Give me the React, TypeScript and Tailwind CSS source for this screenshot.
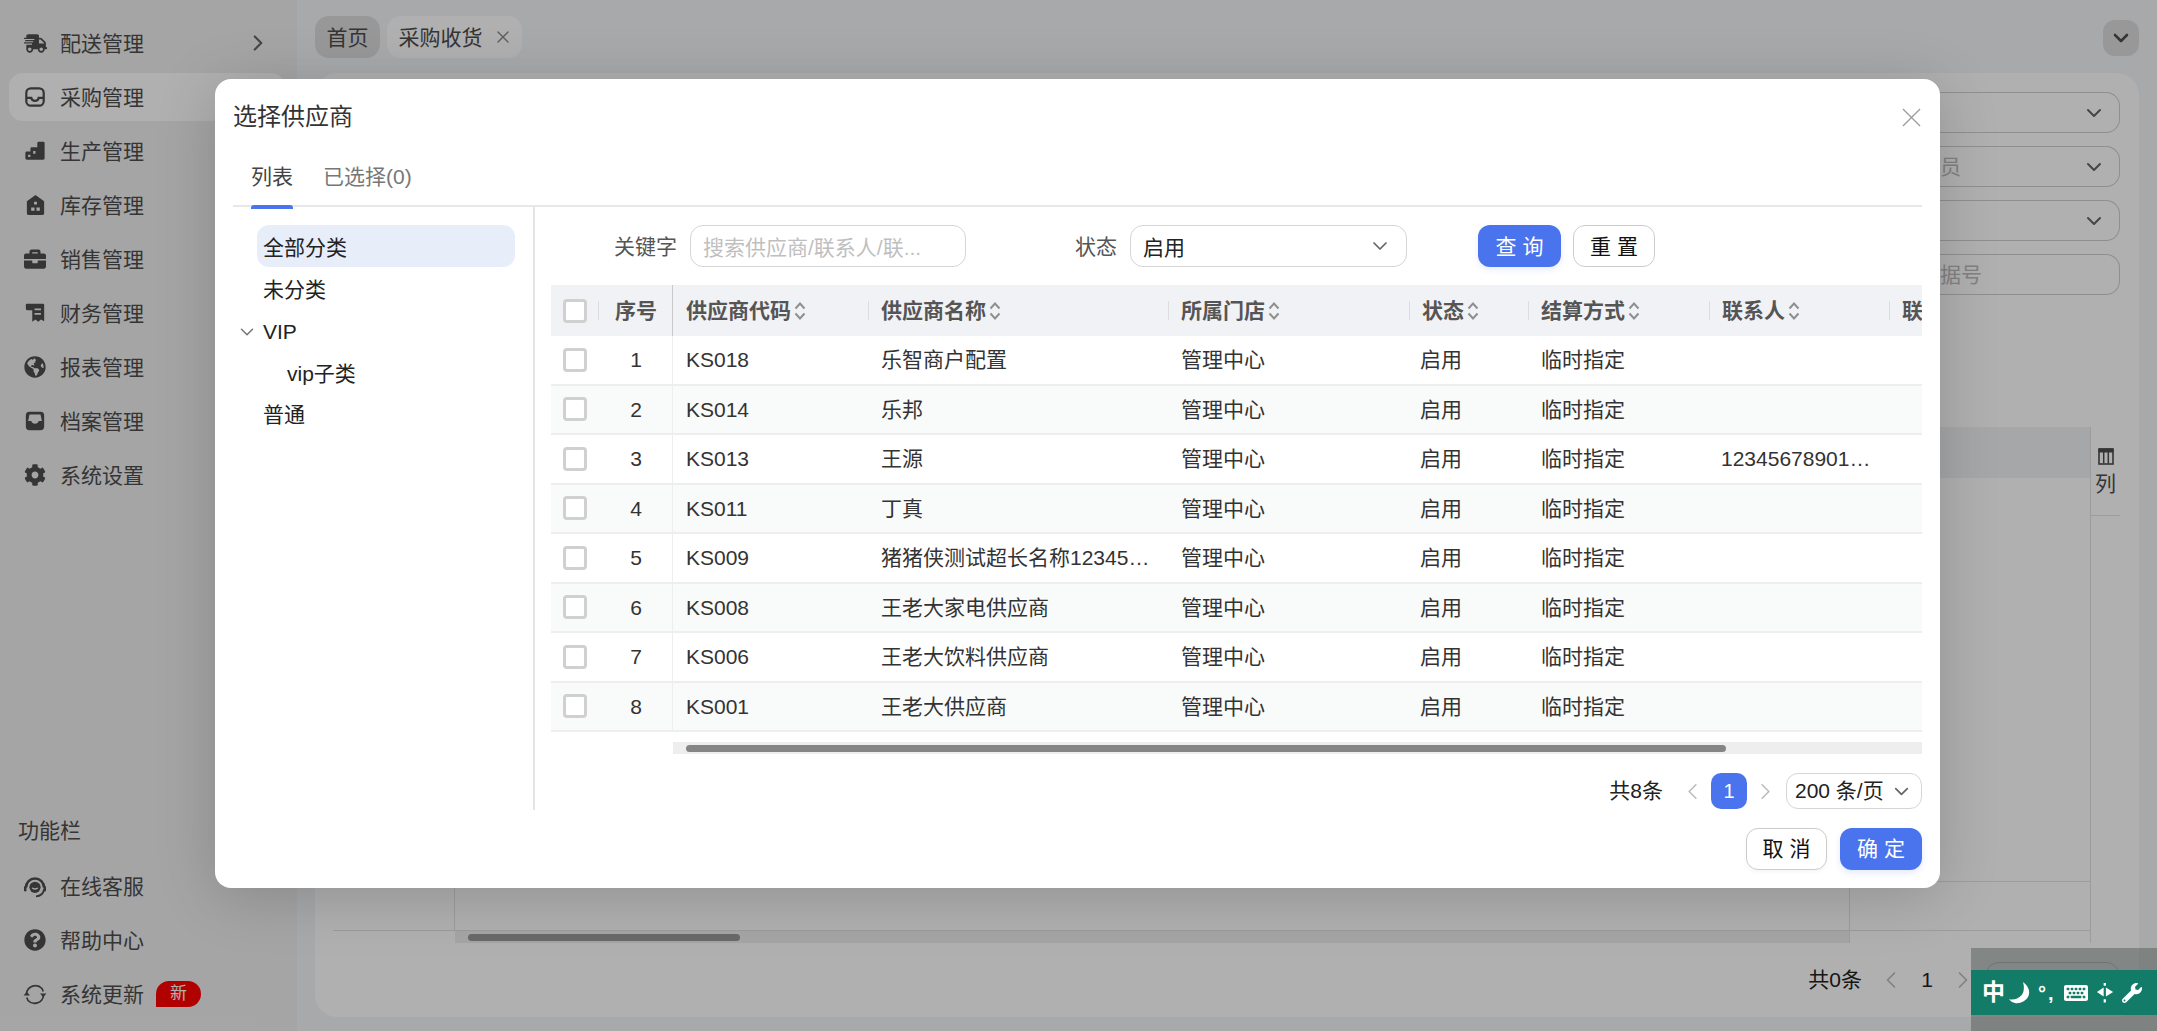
import React from "react";
import { FaBriefcase, FaCog, FaGlobeAmericas, FaKeyboard, FaQuestionCircle, FaShippingFast, FaWrench } from "react-icons/fa";
import { ChevronDown, ChevronLeft, ChevronRight, X } from "lucide-react";

const FONT = "font-['Liberation_Sans','Noto_Sans_CJK_SC',sans-serif]";

// sidebar icons the packages don't have
const InboxLine = () => (
  <svg viewBox="0 0 24 24" className="h-[22px] w-[22px]" fill="none" stroke="currentColor" strokeWidth="2.4">
    <rect x="2.5" y="2.5" width="19" height="19" rx="5" />
    <path d="M3 13h5c.4 2 2 3.2 4 3.2s3.600-1.200 4-3.200h5" />
  </svg>
);
const InboxFill = () => (
  <svg viewBox="0 0 24 24" className="h-[22px] w-[22px]" fill="currentColor">
    <path fillRule="evenodd" d="M6 2h12a4 4 0 0 1 4 4v12a4 4 0 0 1-4 4H6a4 4 0 0 1-4-4V6a4 4 0 0 1 4-4zm0 3L4.500 12H8c.4 2 2 3 4 3s3.600-1 4-3h3.500L18 5z" />
  </svg>
);
const Stairs = () => (
  <svg viewBox="0 0 24 24" className="h-[22px] w-[22px]" fill="currentColor">
    <path fillRule="evenodd" d="M16 2h5a1.500 1.500 0 0 1 1.500 1.500V20a1.500 1.500 0 0 1-1.500 1.500H3A1.500 1.500 0 0 1 1.500 20v-6A1.500 1.500 0 0 1 3 12.500h4V9.500A1.500 1.500 0 0 1 8.500 8h6V3.500A1.500 1.500 0 0 1 16 2zM10 12v3h2.500v-3zM4.500 16v2.500H7V16z" />
  </svg>
);
const House = () => (
  <svg viewBox="0 0 24 24" className="h-[23px] w-[23px]" fill="currentColor">
    <path fillRule="evenodd" d="M12 1 21 7.500V20a2 2 0 0 1-2 2H5a2 2 0 0 1-2-2V7.500zM10.500 8v3h3V8zM7.500 14v3.500H11V14zM13 14v3.500h3.500V14z" />
  </svg>
);
const Receipt = () => (
  <svg viewBox="0 0 24 24" className="h-[22px] w-[22px]" fill="currentColor">
    <path fillRule="evenodd" d="M3 2h18a1 1 0 0 1 1 1v18l-3.500-2-3 2.500-3-2.500L9 21.500V9H4a2 2 0 0 1-2-2V3a1 1 0 0 1 1-1zm8.500 5v2h7V7zm0 5v2h7v-2z" />
  </svg>
);
const Headset = () => (
  <svg viewBox="0 0 24 24" className="h-[27px] w-[27px]" fill="none" stroke="currentColor">
    <path d="M3 13a9 9 0 1 1 18 0" strokeWidth="2.600" />
    <path d="M21 15c-.6 3.800-3.800 6.500-8 6.800" strokeWidth="1.800" />
    <circle cx="12" cy="12.800" r="5.600" fill="currentColor" stroke="none" />
    <path d="M9.300 13.300c.7 1.500 4.700 1.500 5.400 0" stroke="#f0f0f0" strokeWidth="1.400" />
    <rect x="1" y="11.500" width="2.500" height="5.500" rx="1.200" fill="currentColor" stroke="none" />
    <rect x="20.500" y="11.500" width="2.500" height="5.500" rx="1.200" fill="currentColor" stroke="none" />
  </svg>
);
const Sync = () => (
  <svg viewBox="0 0 24 24" className="h-[27px] w-[27px]" fill="none" stroke="currentColor" strokeWidth="1.700">
    <path d="M3.500 11A9 9 0 0 1 19 6l1.200 3" />
    <path d="M20.500 13A9 9 0 0 1 5 18l-1.200-3" />
    <path d="M0.500 13h6.500l-3.200-3.800z M23.500 11h-6.500l3.200 3.800z" fill="currentColor" stroke="none" />
  </svg>
);
const Moon = () => (
  <svg viewBox="0 0 24 24" className="h-[24px] w-[24px]" fill="currentColor">
    <path d="M15 1c5 3.500 7.500 9 5.500 14-2 4.800-8.500 8-13.500 7-2.400-.5-4.500-2-6-3.800 5 .8 9.500-.5 12.500-4C16 11.500 16.500 6 15 1z" />
  </svg>
);
const Split = () => (
  <svg viewBox="0 0 20 24" className="h-[24px] w-[18px]" fill="currentColor">
    <path d="M8.500 6v10L1 11zM11 6v10l8-5z" />
    <path d="M8.500 1h2.500v3H8.500zM8.500 19h2.500v3.500H8.500z" />
  </svg>
);
const ColumnsIcon = () => (
  <svg viewBox="0 0 16 18" className="h-[19px] w-[16px]" fill="none" stroke="currentColor">
    <rect x="1" y="1.500" width="14" height="15" strokeWidth="1.600" />
    <path d="M1 1.500h14v3H1z" fill="currentColor" strokeWidth="1" />
    <path d="M5.700 2v14M10.300 2v14" strokeWidth="1.500" />
  </svg>
);
const SortIcon = () => (
  <svg viewBox="0 0 12 24" className="ml-[3px] h-[24px] w-[12px] shrink-0" fill="none" stroke="#8f8f8f" strokeWidth="2">
    <path d="M1.500 9.500 6 4.500l4.500 5M1.500 14.500 6 19.500l4.500-5" />
  </svg>
);

const menus = [
  { name: "配送管理", icon: <FaShippingFast size={23} />, arrow: true },
  { name: "采购管理", icon: <InboxLine />, active: true },
  { name: "生产管理", icon: <Stairs /> },
  { name: "库存管理", icon: <House /> },
  { name: "销售管理", icon: <FaBriefcase size={22} /> },
  { name: "财务管理", icon: <Receipt /> },
  { name: "报表管理", icon: <FaGlobeAmericas size={22} /> },
  { name: "档案管理", icon: <InboxFill /> },
  { name: "系统设置", icon: <FaCog size={22} /> },
];

const suppliers = [
  { code: "KS018", name: "乐智商户配置" },
  { code: "KS014", name: "乐邦" },
  { code: "KS013", name: "王源", contact: "123456789012345" },
  { code: "KS011", name: "丁真" },
  { code: "KS009", name: "猪猪侠测试超长名称123456789" },
  { code: "KS008", name: "王老大家电供应商" },
  { code: "KS006", name: "王老大饮料供应商" },
  { code: "KS001", name: "王老大供应商" },
];

const COLS = "grid grid-cols-[47px_75px_195px_300px_241px_119px_181px_180px_200px]";

const MenuRow = ({ icon, name, active, children }: { icon: React.ReactNode; name: string; active?: boolean; children?: React.ReactNode }) => (
  <div className={`flex h-[48px] items-center rounded-[14px] pl-[14px] pr-[16px] ${active ? "bg-white" : ""}`}>
    <span className="flex w-[24px] justify-center text-[#4d4d4d]">{icon}</span>
    <span className="ml-[13px] pt-[2px] text-[21px] text-[#4d4d4d]">{name}</span>
    {children}
  </div>
);

const Sidebar = () => (
  <aside className="flex h-full w-[297px] shrink-0 flex-col bg-[#f0f0f0] pb-[13px] pl-[9px] pr-[12px] pt-[19px]">
    <div className="flex flex-col gap-[6px]">
      {menus.map((m) => (
        <MenuRow key={m.name} icon={m.icon} name={m.name} active={m.active}>
          {m.arrow && <ChevronRight size={26} strokeWidth={2} className="ml-auto mr-[-2px] text-[#666666]" />}
        </MenuRow>
      ))}
    </div>
    <div className="mt-auto pl-[9px] text-[21px] leading-[30px] text-[#4d4d4d]">功能栏</div>
    <div className="mt-[16px] flex flex-col gap-[6px]">
      <MenuRow icon={<Headset />} name="在线客服" />
      <MenuRow icon={<FaQuestionCircle size={22} />} name="帮助中心" />
      <MenuRow icon={<Sync />} name="系统更新">
        <span className="ml-[12px] flex h-[26px] w-[45px] items-center justify-center rounded-[13px] rounded-bl-none bg-[#ff0000] text-[17px] text-white">新</span>
      </MenuRow>
    </div>
  </aside>
);

const Background = () => (
  <main className="flex h-full flex-1 flex-col bg-[#f3f5f8]">
    <div className="flex h-[73px] shrink-0 items-start gap-[7px] pl-[18px] pr-[18px] pt-[16px] text-[21px] text-[#4d4d4d]">
      <div className="flex h-[42px] w-[65px] items-center justify-center rounded-[14px] bg-[#dddddd] pt-[2px]">首页</div>
      <div className="flex h-[42px] w-[135px] items-center justify-center gap-[10px] rounded-[14px] bg-white pl-[2px]">
        <span className="pt-[2px]">采购收货</span> <X size={20} strokeWidth={1.6} className="text-[#888888]" />
      </div>
      <div className="ml-auto mt-[4px] flex h-[36px] w-[36px] items-center justify-center rounded-[12px] bg-[#dddddd]">
        <ChevronDown size={24} strokeWidth={2.6} />
      </div>
    </div>
    <div className="mb-[14px] ml-[18px] mr-[18px] flex flex-1 flex-col rounded-[22px] bg-white pl-[18px] pr-[19px] pt-[19px]">
      <div className="flex flex-col items-end gap-[13px]">
        {["", "员", "", "据号"].map((t, i) => (
          <div key={i} className="flex h-[41px] w-[200px] items-center rounded-r-[14px] border border-l-0 border-[#cfcfcf] pl-[20px] pr-[13px] text-[21px] text-[#bdbdbd]">
            {t && <span>{t}</span>}
            {i < 3 && <ChevronDown size={24} strokeWidth={2} className="ml-auto text-[#666666]" />}
          </div>
        ))}
      </div>
      <div className="mt-[132px] flex h-[516px] shrink-0">
        <div className="flex min-w-0 flex-1 flex-col">
          <div className="h-[51px] shrink-0 bg-[#f0f2f5]" />
          <div className="grid flex-1 grid-cols-[122px_1395px_1fr] grid-rows-[404px_49px_12px]">
            <div className="border-b border-r border-[#e2e2e2]" />
            <div className="border-b border-r border-[#e2e2e2]" />
            <div className="border-b border-[#e2e2e2]" />
            <div className="border-b border-r border-[#e2e2e2]" />
            <div className="border-b border-r border-[#e2e2e2]" />
            <div className="border-b border-[#e2e2e2]" />
            <div />
            <div className="flex items-center border-r border-[#e2e2e2] bg-[#f0f0f0] pl-[13px]">
              <div className="h-[7px] w-[272px] rounded-full bg-[#999999]" />
            </div>
            <div />
          </div>
        </div>
        <div className="w-[30px] shrink-0 border-l border-[#e2e2e2]">
          <div className="flex h-[89px] flex-col items-center border-b border-[#e2e2e2] pt-[20px] text-[21px] leading-[28px] text-[#4d4d4d]">
            <ColumnsIcon />
            <span className="mt-[4px]">列</span>
          </div>
        </div>
      </div>
      <div className="flex h-[74px] items-center justify-end text-[21px] text-[#222222]">
        <span>共0条</span>
        <ChevronLeft size={28} strokeWidth={1.5} className="ml-[15px] text-[#bbbbbb]" />
        <span className="w-[44px] text-center">1</span>
        <ChevronRight size={28} strokeWidth={1.5} className="text-[#bbbbbb]" />
        <div className="ml-[8px] h-[37px] w-[135px] rounded-[14px] border border-[#cfcfcf]" />
      </div>
    </div>
  </main>
);

const TableHeadCell = ({ children, sep = true }: { children: React.ReactNode; sep?: boolean }) => (
  <div className="relative flex items-center whitespace-nowrap pl-[13px] font-bold text-[#555555]">
    {sep && <span className="absolute left-0 top-[16px] h-[19px] w-px bg-[#dddddd]" />}
    {children}
  </div>
);

const CheckBox = () => <span className="h-[24px] w-[24px] rounded-[4px] border-[3px] border-[#d0d0d0] bg-white" />;

const SupplierTable = () => (
  <div className="overflow-hidden text-[21px] text-[#333333]">
    <div className={`${COLS} h-[51px] bg-[#f1f2f5]`}>
      <div className="flex items-center pl-[12px]"><CheckBox /></div>
      <div className="relative flex items-center justify-center border-r border-[#c9c9c9] pl-[2px] font-bold text-[#555555]">
        <span className="absolute left-0 top-[16px] h-[19px] w-px bg-[#dddddd]" />
        序号
      </div>
      <TableHeadCell sep={false}>供应商代码<SortIcon /></TableHeadCell>
      <TableHeadCell>供应商名称<SortIcon /></TableHeadCell>
      <TableHeadCell>所属门店<SortIcon /></TableHeadCell>
      <TableHeadCell>状态<SortIcon /></TableHeadCell>
      <TableHeadCell>结算方式<SortIcon /></TableHeadCell>
      <TableHeadCell>联系人<SortIcon /></TableHeadCell>
      <TableHeadCell>联系电话</TableHeadCell>
    </div>
    {suppliers.map((s, i) => (
      <div key={s.code} className={`${COLS} h-[49.500px] items-center border-b-2 border-[#eeeeee] ${i % 2 ? "bg-[#f9fafa]" : "bg-white"}`}>
        <div className="flex items-center pl-[12px]"><CheckBox /></div>
        <div className="flex h-full items-center justify-center border-r border-[#eeeeee] pl-[2px]">{i + 1}</div>
        <div className="pl-[13px]">{s.code}</div>
        <div className="truncate pl-[13px] pr-[13px]">{s.name}</div>
        <div className="pl-[13px]">管理中心</div>
        <div className="pl-[11px]">启用</div>
        <div className="pl-[13px]">临时指定</div>
        <div className="truncate pl-[12px] pr-[13px]">{s.contact}</div>
        <div />
      </div>
    ))}
    <div className="ml-[122px] mt-[10px] flex h-[12px] items-center bg-[#eeeeee] pl-[13px]">
      <div className="h-[7px] w-[1040px] rounded-full bg-[#858585]" />
    </div>
  </div>
);

const SupplierDialog = () => (
  <div className="absolute left-[215px] top-[79px] flex h-[809px] w-[1725px] flex-col rounded-[16px] bg-white pl-[18px] pr-[18px] shadow-[0_8px_60px_rgba(0,0,0,0.18)]">
    <div className="flex h-[76px] shrink-0 items-center">
      <span className="text-[24px] text-[#333333]">选择供应商</span>
      <svg viewBox="0 0 20 20" className="ml-auto mr-[1px] h-[19px] w-[19px]" stroke="#999999" strokeWidth="1.300">
        <path d="M1 1l18 18M19 1 1 19" />
      </svg>
    </div>
    <div className="flex h-[52px] shrink-0 items-start border-b-2 border-[#e8e8e8] pl-[18px] text-[21px]">
      <div className="relative flex h-[52px] items-start pt-[6px] text-[#444444]">
        列表
        <span className="absolute bottom-[-2px] left-0 h-[4px] w-full rounded-t-[3px] bg-[#4a74ee]" />
      </div>
      <div className="ml-[30px] pt-[6px] text-[#777777]">已选择(0)</div>
    </div>
    <div className="flex h-[603px] shrink-0">
      <div className="w-[302px] shrink-0 border-r-2 border-[#e4e4e4] pt-[18px] text-[21px] text-[#222222]">
        <div className="ml-[24px] flex h-[42px] w-[258px] items-center rounded-[12px] bg-[#e8edfa] pl-[6px] pt-[3px]">全部分类</div>
        <div className="ml-[30px] flex h-[42px] items-center pt-[3px]">未分类</div>
        <div className="flex h-[42px] items-center pl-[3px] pt-[3px]">
          <ChevronDown size={22} strokeWidth={1.7} className="mr-[5px] text-[#777777]" />
          VIP
        </div>
        <div className="ml-[54px] flex h-[42px] items-center pt-[3px]">vip子类</div>
        <div className="ml-[30px] flex h-[42px] items-center pt-[2px]">普通</div>
      </div>
      <div className="min-w-0 flex-1 pl-[16px] pt-[18px]">
        <div className="mb-[18px] flex h-[42px] items-center text-[21px]">
          <label className="w-[126px] pt-[2px] text-right text-[#555555]">关键字</label>
          <div className="ml-[13px] flex h-[42px] w-[276px] items-center rounded-[13px] border border-[#d5d5d5] pl-[12px] pt-[3px] text-[#bfbfbf]">搜索供应商/联系人/联...</div>
          <label className="w-[151px] pt-[2px] text-right text-[#555555]">状态</label>
          <div className="ml-[13px] flex h-[42px] w-[277px] items-center rounded-[13px] border border-[#d5d5d5] pl-[12px] pr-[14px] text-[#222222]">
            <span className="pt-[3px]">启用</span>
            <ChevronDown size={24} strokeWidth={1.7} className="ml-auto text-[#666666]" />
          </div>
          <button className="ml-[71px] h-[42px] w-[83px] rounded-[12px] bg-[#4a74ee] pt-[2px] text-[21px] text-white shadow-[0_3px_6px_rgba(74,116,238,0.12)]">查 询</button>
          <button className="ml-[12px] h-[42px] w-[82px] rounded-[12px] border border-[#cccccc] bg-white pt-[2px] text-[21px] text-[#111111]">重 置</button>
        </div>
        <SupplierTable />
        <div className="mt-[19px] flex h-[36px] items-center justify-end text-[21px] text-[#222222]">
          <span>共8条</span>
          <ChevronLeft size={27} strokeWidth={1.400} className="ml-[16px] text-[#bbbbbb]" />
          <span className="ml-[5px] flex h-[36px] w-[36px] items-center justify-center rounded-[10px] bg-[#4a74ee] text-[20px] text-white">1</span>
          <ChevronRight size={27} strokeWidth={1.400} className="ml-[5px] text-[#bbbbbb]" />
          <div className="ml-[7px] flex h-[36px] w-[136px] items-center rounded-[12px] border border-[#d5d5d5] pl-[8px] pr-[8px] text-[#222222]">
            200 条/页
            <ChevronDown size={23} strokeWidth={1.800} className="ml-auto text-[#666666]" />
          </div>
        </div>
      </div>
    </div>
    <div className="flex h-[78px] shrink-0 items-start justify-end gap-[13px] pt-[18px]">
      <button className="h-[42px] w-[81px] rounded-[12px] border border-[#cccccc] bg-white text-[21px] text-[#111111] shadow-[0_2px_4px_rgba(0,0,0,0.04)]">取 消</button>
      <button className="h-[42px] w-[82px] rounded-[12px] bg-[#4a74ee] text-[21px] text-white shadow-[0_3px_6px_rgba(74,116,238,0.15)]">确 定</button>
    </div>
  </div>
);

const ImeBar = () => (
  <div className="absolute bottom-0 right-0 h-[83px] w-[186px] bg-[#3f4a46]/[0.4] pt-[22px]">
    <div className="flex h-[45px] items-center bg-[#127c68] pl-[11px] text-white">
      <span className="w-[26px] text-[23px] font-bold leading-none">中</span>
      <Moon />
      <span className="ml-[6px] flex w-[26px] items-start text-[20px] font-bold leading-none">°<span className="ml-[2px]">,</span></span>
      <FaKeyboard size={24} />
      <span className="ml-[8px]"><Split /></span>
      <span className="ml-[8px]"><FaWrench size={20} /></span>
    </div>
  </div>
);

export default function App() {
  return (
    <div className={`relative flex h-screen w-screen overflow-hidden ${FONT}`}>
      <Sidebar />
      <Background />
      <div className="absolute inset-0 bg-black/[0.31]" />
      <SupplierDialog />
      <ImeBar />
    </div>
  );
}
